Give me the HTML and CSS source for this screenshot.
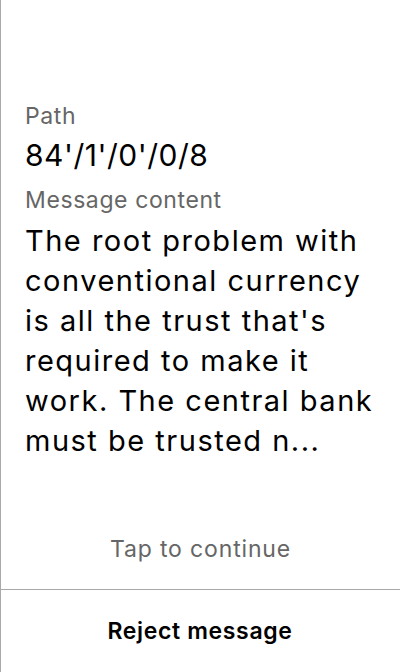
FILE: index.html
```html
<!DOCTYPE html>
<html>
<head>
<meta charset="utf-8">
<link rel="stylesheet" href="styles.css">
</head>
<body>
<div class="screen">
  <div class="content">
    <div class="label">Path</div>
    <div class="path">84'/1'/0'/0/8</div>
    <div class="label label-msg">Message content</div>
    <div class="message">The root problem with conventional currency is all the trust that's required to make it work. The central bank must be trusted n...</div>
  </div>
  <div class="tap">Tap to continue</div>
  <div class="reject">Reject message</div>
</div>
</body>
</html>
```
FILE: styles.css
```css
html, body {
  margin: 0;
  padding: 0;
  background: #fff;
}
body {
  font-family: Inter, "Noto Sans", sans-serif;
  color: #000;
}
.screen {
  height: 672px;
  border-left: 1px solid #a9a9a9;
  display: flex;
  flex-direction: column;
  box-sizing: border-box;
}
.content {
  flex: 1;
  padding: 102px 16px 0 24px;
}
.label {
  font-size: 23px;
  line-height: 28px;
  letter-spacing: 0.6px;
  color: #666;
}
.path {
  margin-top: 7px;
  font-size: 30px;
  line-height: 36px;
  letter-spacing: 0.5px;
}
.label-msg {
  margin-top: 13px;
}
.message {
  margin-top: 7px;
  font-size: 29px;
  line-height: 40px;
  letter-spacing: 1.5px;
}
.tap {
  text-align: center;
  font-size: 23px;
  line-height: 28px;
  letter-spacing: 0.85px;
  color: #666;
  padding-bottom: 26px;
}
.reject {
  height: 82px;
  border-top: 1px solid #a9a9a9;
  margin-left: -1px;
  display: flex;
  align-items: center;
  justify-content: center;
  font-size: 23px;
  font-weight: 600;
  letter-spacing: 0.65px;
}
```
